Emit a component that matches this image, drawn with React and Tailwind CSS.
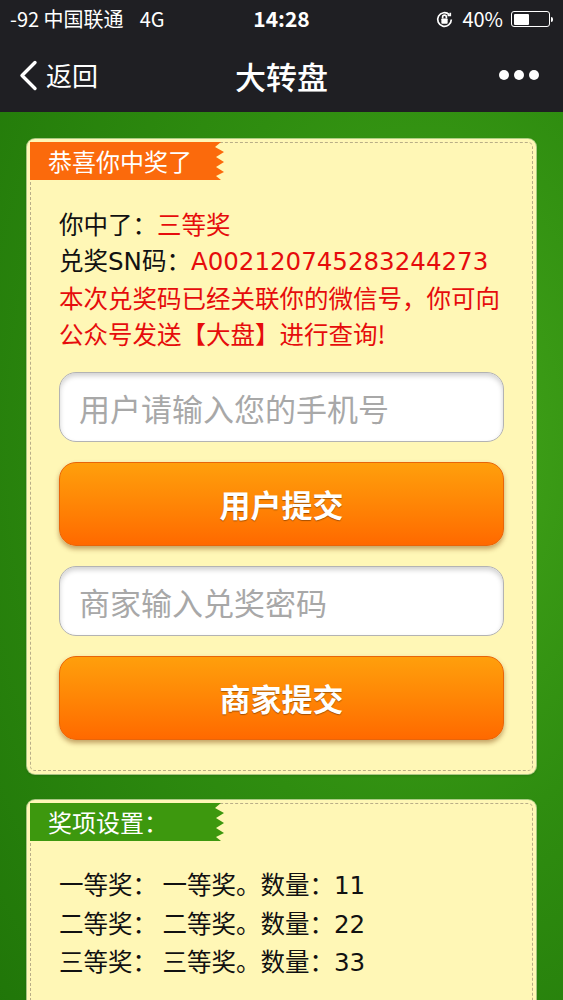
import React from "react";

const font = { fontFamily: '"Noto Sans CJK SC", "Noto Sans", sans-serif' };
const latin = { fontFamily: '"DejaVu Sans", "Noto Sans CJK SC", sans-serif' };

function StatusBar() {
  return (
    <div className="relative flex h-[38px] items-center justify-between px-[10px] text-white">
      <div className="flex items-center text-[20px] leading-none">
        <span>-92 中国联通</span>
        <span className="ml-[16px]">4G</span>
      </div>
      <div className="absolute left-1/2 top-[8px] -translate-x-1/2 text-[21px] font-semibold leading-none">14:28</div>
      <div className="flex items-center gap-[7px] text-[20px] leading-none">
        <svg width="21" height="21" viewBox="0 0 20 20" fill="none" stroke="white" strokeWidth="1.6">
          <path d="M16.5 10a6.5 6.5 0 1 1-2-4.7" />
          <path d="M15.5 3.5v2.6h-2.6" fill="none" />
          <rect x="7" y="9" width="6" height="5" rx="0.8" fill="white" stroke="none" />
          <path d="M8.2 9V7.6a1.8 1.8 0 0 1 3.6 0V9" />
        </svg>
        <span className="mr-[1px]">40%</span>
        <div className="flex items-center">
          <div className="h-[16px] w-[39px] rounded-[3px] border border-white p-[1.5px]">
            <div className="h-full w-[15px] rounded-[1px] bg-white" />
          </div>
          <div className="ml-[1px] h-[5px] w-[2px] rounded-r-sm bg-white" />
        </div>
      </div>
    </div>
  );
}

function NavBar() {
  return (
    <div className="relative flex h-[74px] items-center px-[19px] text-white">
      <div className="flex items-center">
        <svg width="19" height="31" viewBox="0 0 19 31" fill="none" stroke="white" strokeWidth="3.4" strokeLinecap="round" strokeLinejoin="round">
          <path d="M16 2.5 3 15.5l13 13" />
        </svg>
        <span className="ml-[8px] text-[26px] leading-none">返回</span>
      </div>
      <div className="absolute left-1/2 top-1/2 -translate-x-1/2 -translate-y-1/2 text-[31px] font-medium leading-none">大转盘</div>
      <div className="ml-auto mr-[5px] flex items-center gap-[5px]">
        <span className="h-[10px] w-[10px] rounded-full bg-white" />
        <span className="h-[10px] w-[10px] rounded-full bg-white" />
        <span className="h-[10px] w-[10px] rounded-full bg-white" />
      </div>
    </div>
  );
}

function Tab({ color, children }) {
  const w = 194;
  const clip = {
    clipPath: `polygon(0 0, ${w - 3}px 0, ${w - 9}px 5px, ${w}px 10px, ${w - 8}px 15px, ${w}px 20px, ${w - 8}px 25px, ${w}px 30px, ${w - 8}px 34px, ${w - 3}px 38px, 0 38px)`,
  };
  return (
    <div
      className={`flex h-[38px] w-[194px] items-center pl-[18px] text-[24px] leading-none text-white ${color}`}
      style={clip}
    >
      {children}
    </div>
  );
}

function Card({ tab, children, className = "" }) {
  return (
    <div className={`rounded-[8px] bg-[#fff7b6] p-[3px] shadow-[0_0_0_1px_rgba(255,250,210,0.6),0_1px_3px_rgba(0,0,0,0.25)] ${className}`}>
      <div className="relative rounded-[5px] border border-dashed border-[#b9ae87]">
        <div className="-ml-px -mt-px">{tab}</div>
        {children}
      </div>
    </div>
  );
}

function Field({ placeholder }) {
  return (
    <input
      placeholder={placeholder}
      className="h-[70px] w-full rounded-[17px] border border-[#b3b3b3] bg-white px-[19px] text-[31px] text-[#333] shadow-[inset_0_3px_5px_rgba(0,0,0,0.18)] outline-none placeholder:text-[#a8a8a8]"
      style={font}
    />
  );
}

function OrangeButton({ children }) {
  return (
    <button
      className="flex h-[84px] w-full items-center justify-center rounded-[17px] border border-[#e8650a] bg-gradient-to-b from-[#ff9f0c] to-[#ff6900] text-[31px] font-bold text-white shadow-[0_3px_5px_rgba(120,60,0,0.45)] [text-shadow:0_1px_1px_rgba(0,0,0,0.35)]"
      style={font}
    >
      {children}
    </button>
  );
}

const prizes = [
  ["一等奖", "11"],
  ["二等奖", "22"],
  ["三等奖", "33"],
];

export default function App() {
  return (
    <div className="min-h-screen overflow-hidden bg-[#1f1f23]" style={font}>
      <StatusBar />
      <NavBar />

      <div className="min-h-[888px] bg-[#2d8a0e] bg-[radial-gradient(ellipse_at_75%_35%,#44a61a_0%,#2f8d10_45%,#1f7408_100%)] px-[27px] pt-[27px] pb-[40px]">
        <Card tab={<Tab color="bg-[#fb6a0c]">恭喜你中奖了</Tab>}>
          <div className="px-[28px] pt-[26px] pb-[30px]">
            <div className="text-[24.5px] leading-[36px]">
              <div>
                <span className="text-[#111]">你中了：</span>
                <span className="text-[#e60c0c]">三等奖</span>
              </div>
              <div>
                <span className="text-[#111]">兑奖<span style={latin}>SN</span>码：</span>
                <span className="text-[#e60c0c]" style={latin}>A002120745283244273</span>
              </div>
              <div className="text-[#e60c0c]">本次兑奖码已经关联你的微信号，你可向公众号发送【大盘】进行查询!</div>
            </div>

            <div className="mt-[20px] flex flex-col gap-[20px]">
              <Field placeholder="用户请输入您的手机号" />
              <OrangeButton>用户提交</OrangeButton>
              <Field placeholder="商家输入兑奖密码" />
              <OrangeButton>商家提交</OrangeButton>
            </div>
          </div>
        </Card>

        <Card className="mt-[26px]" tab={<Tab color="bg-[#3d980e]">奖项设置：</Tab>}>
          <div className="px-[28px] pt-[25px] pb-[40px] text-[24.5px] leading-[36.5px] text-[#111]">
            {prizes.map(([name, n]) => (
              <div key={name}>
                {name}：&nbsp;{name}。数量：<span style={latin}>{n}</span>
              </div>
            ))}
          </div>
        </Card>
      </div>
    </div>
  );
}
